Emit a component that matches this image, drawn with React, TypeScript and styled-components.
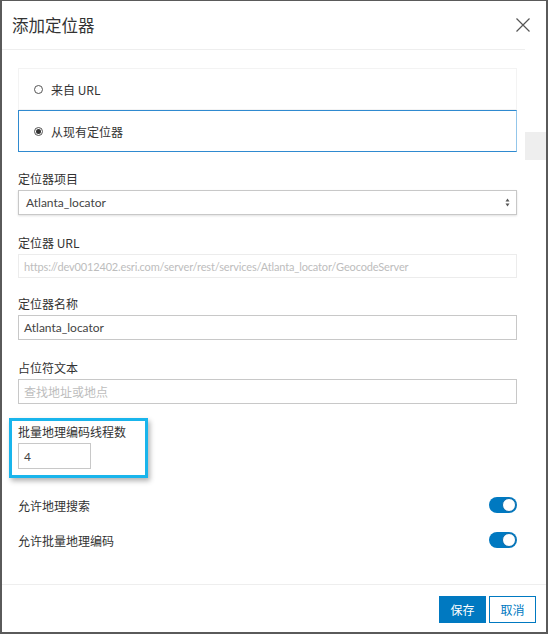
import * as React from 'react';
import styled, { createGlobalStyle } from 'styled-components';

const GlobalStyle = createGlobalStyle`
  html, body {
    margin: 0;
    padding: 0;
    background: #ffffff;
  }
  body {
    font-family: Lato, "Noto Sans CJK SC", sans-serif;
    color: #323232;
  }
  * {
    box-sizing: border-box;
  }
`;

const Dialog = styled.div`
  width: 548px;
  height: 634px;
  border: 2px solid #5a5a5a;
  border-top-width: 1px;
  background: #fff;
  display: flex;
  flex-direction: column;
`;

const Header = styled.div`
  height: 48px;
  display: flex;
  align-items: center;
  justify-content: space-between;
  padding: 0 15px 0 10px;
`;

const Title = styled.h2`
  margin: 0;
  font-family: "Noto Sans CJK SC", sans-serif;
  font-size: 16.5px;
  font-weight: 400;
  color: #333;
`;

const CloseButton = styled.button`
  border: 0;
  background: none;
  padding: 0;
  width: 16px;
  height: 16px;
  display: flex;
  align-items: center;
  justify-content: center;
  cursor: pointer;
`;

const Body = styled.div`
  flex: 1;
  display: flex;
  min-height: 0;
`;

const Content = styled.div`
  width: 523px;
  border-top: 1px solid #eeeeee;
  padding: 18px 8px 0 16px;
  display: flex;
  flex-direction: column;
`;

const Gutter = styled.div`
  flex: 1;
  display: flex;
  flex-direction: column;
  align-items: flex-start;
`;

const Thumb = styled.div`
  margin-top: 83px;
  width: 21px;
  height: 28px;
  background: #eeeeee;
`;

const RadioCard = styled.label<{ $selected?: boolean }>`
  display: flex;
  align-items: center;
  gap: 8px;
  height: 42px;
  padding-left: 15px;
  border: 1px solid ${p => (p.$selected ? '#2f8ad0' : '#f3f3f3')};
  border-right-color: ${p => (p.$selected ? '#93c6ea' : '#f3f3f3')};
  font-family: "Noto Sans CJK SC", sans-serif;
  font-size: 12px;
  color: #333;
`;

const RadioDot = styled.span<{ $checked?: boolean }>`
  width: 9px;
  height: 9px;
  border-radius: 50%;
  border: 1px solid #555;
  display: flex;
  align-items: center;
  justify-content: center;
  &::after {
    content: '';
    width: 5px;
    height: 5px;
    border-radius: 50%;
    background: ${p => (p.$checked ? '#333' : 'transparent')};
  }
`;

const Field = styled.div<{ $gap: number }>`
  position: relative;
  margin-top: ${p => p.$gap}px;
  display: flex;
  flex-direction: column;
  align-items: flex-start;
`;

const Label = styled.div`
  font-family: "Noto Sans CJK SC", sans-serif;
  font-size: 12px;
  line-height: 20px;
  margin-bottom: 1px;
  color: #323232;
`;

const TextBox = styled.div<{ $h: number; $w?: number; $disabled?: boolean; $muted?: boolean }>`
  width: ${p => (p.$w ? `${p.$w}px` : '100%')};
  height: ${p => p.$h}px;
  border: 1px solid ${p => (p.$disabled ? '#ececec' : '#c8c8c8')};
  display: flex;
  align-items: center;
  justify-content: space-between;
  padding: 0 6px 0 5px;
  font-size: ${p => (p.$disabled ? 11 : 12)}px;
  letter-spacing: ${p => (p.$disabled ? '-0.15px' : 'normal')};
  color: ${p => (p.$disabled || p.$muted ? '#bdbdbd' : '#444')};
  white-space: nowrap;
  overflow: hidden;
`;

const SelectBox = styled(TextBox)`
  box-shadow: 0 1px 2px rgba(0, 0, 0, 0.12);
  padding-left: 7px;
`;

const Hint = styled.span`
  font-family: "Noto Sans CJK SC", sans-serif;
`;

const Highlight = styled.div`
  position: absolute;
  left: -9px;
  top: -4px;
  width: 139px;
  height: 60px;
  border: 3px solid #19b5ec;
  box-shadow: 2px 3px 5px rgba(0, 0, 0, 0.3);
  pointer-events: none;
`;

const ToggleRow = styled.div<{ $gap: number }>`
  margin-top: ${p => p.$gap}px;
  height: 24px;
  display: flex;
  align-items: center;
  justify-content: space-between;
  font-family: "Noto Sans CJK SC", sans-serif;
  font-size: 12px;
  color: #323232;
`;

const Toggle = styled.span`
  width: 28px;
  height: 16px;
  border-radius: 8px;
  background: #0079c1;
  display: flex;
  align-items: center;
  justify-content: flex-end;
  padding-right: 1px;
  &::after {
    content: '';
    width: 12px;
    height: 12px;
    border-radius: 50%;
    background: #fff;
    border: 1px solid #0b6cab;
  }
`;

const Footer = styled.div`
  height: 48px;
  border-top: 1px solid #eeeeee;
  display: flex;
  justify-content: flex-end;
  align-items: flex-start;
  gap: 3px;
  padding: 11px 10px 0 0;
`;

const Button = styled.button<{ $primary?: boolean }>`
  width: 47px;
  height: 27px;
  border: 1px solid #0079c1;
  background: ${p => (p.$primary ? '#0079c1' : '#fff')};
  color: ${p => (p.$primary ? '#fff' : '#0079c1')};
  font-family: "Noto Sans CJK SC", sans-serif;
  font-size: 12px;
  padding: 0;
  cursor: pointer;
`;

const SelectArrows = () => (
  <svg width="5" height="9" viewBox="0 0 5 9">
    <path d="M2.5 0.5 L4.5 3.5 L0.5 3.5 Z" fill="#555" />
    <path d="M2.5 8.5 L4.5 5.5 L0.5 5.5 Z" fill="#555" />
  </svg>
);

const CloseIcon = () => (
  <svg width="14" height="14" viewBox="0 0 14 14">
    <path d="M0.5 0.5 L13.5 13.5 M13.5 0.5 L0.5 13.5" stroke="#555" strokeWidth="1.2" fill="none" />
  </svg>
);

const App = () => (
  <>
    <GlobalStyle />
    <Dialog>
      <Header>
        <Title>添加定位器</Title>
        <CloseButton aria-label="关闭">
          <CloseIcon />
        </CloseButton>
      </Header>
      <Body>
        <Content>
          <RadioCard>
            <RadioDot />
            来自 URL
          </RadioCard>
          <RadioCard $selected>
            <RadioDot $checked />
            从现有定位器
          </RadioCard>

          <Field $gap={17}>
            <Label>定位器项目</Label>
            <SelectBox $h={25}>
              Atlanta_locator
              <SelectArrows />
            </SelectBox>
          </Field>

          <Field $gap={18}>
            <Label>定位器 URL</Label>
            <TextBox $h={24} $disabled>
              https://dev0012402.esri.com/server/rest/services/Atlanta_locator/GeocodeServer
            </TextBox>
          </Field>

          <Field $gap={16}>
            <Label>定位器名称</Label>
            <TextBox $h={25}>Atlanta_locator</TextBox>
          </Field>

          <Field $gap={18}>
            <Label>占位符文本</Label>
            <TextBox $h={25} $muted>
              <Hint>查找地址或地点</Hint>
            </TextBox>
          </Field>

          <Field $gap={18}>
            <Label>批量地理编码线程数</Label>
            <TextBox $h={26} $w={73}>4</TextBox>
            <Highlight />
          </Field>

          <ToggleRow $gap={24}>
            允许地理搜索
            <Toggle />
          </ToggleRow>
          <ToggleRow $gap={11}>
            允许批量地理编码
            <Toggle />
          </ToggleRow>
        </Content>
        <Gutter>
          <Thumb />
        </Gutter>
      </Body>
      <Footer>
        <Button $primary>保存</Button>
        <Button>取消</Button>
      </Footer>
    </Dialog>
  </>
);

export default App;
